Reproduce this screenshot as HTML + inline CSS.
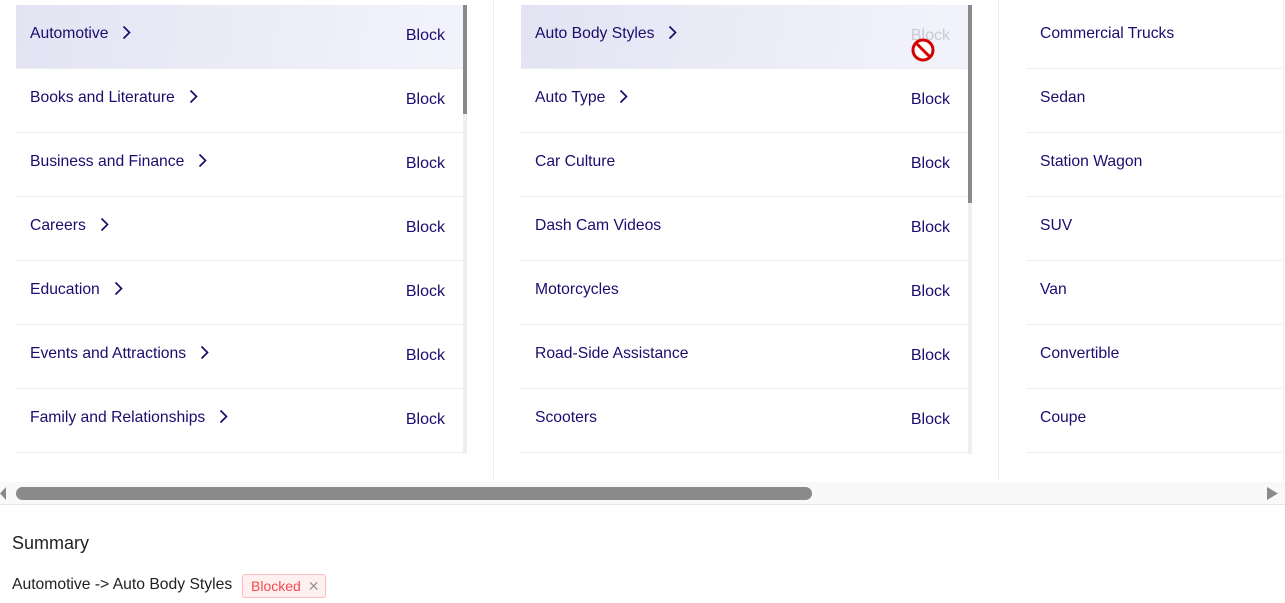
<!DOCTYPE html>
<html><head><meta charset="utf-8"><style>
*{margin:0;padding:0;box-sizing:border-box}
body{width:1285px;height:603px;overflow:hidden;background:#fff;font-family:"Liberation Sans",Arial,sans-serif;position:relative}
.col{position:absolute;top:5px}
.row{position:absolute;left:0;height:64px;border-bottom:1px solid #eeeef0;color:#1e0b6e;font-size:15.7px}
.row .t{position:absolute;left:14px;top:20px;white-space:nowrap}
.row .b{position:absolute;right:18px;top:22px;font-size:16px}
.chev{display:inline-block;width:9px;height:15px;margin-left:14px;vertical-align:-2px}
.sel{background:linear-gradient(100deg,#e3e4f3,#f3f3fc)}
.track{position:absolute;width:4px;background:#efefef}
.thumb{position:absolute;width:4px;background:#8a8a8a}
.div{position:absolute;top:0;width:1px;height:480px;background:#eeeeee}
</style></head><body>
<svg width="0" height="0" style="position:absolute"><defs><symbol id="c" viewBox="0 0 9 15"><polyline points="1.5,1.5 7.5,7.5 1.5,13.5" fill="none" stroke="#1e0b6e" stroke-width="1.7"/></symbol></defs></svg>

<div class="div" style="left:493px"></div>
<div class="div" style="left:998px"></div>
<div class="div" style="left:1283px"></div>

<div class="col" style="left:16px;width:447px">
<div class="row sel" style="top:0;width:447px"><span class="t">Automotive<svg class="chev"><use href="#c"/></svg></span><span class="b">Block</span></div>
<div class="row" style="top:64px;width:447px"><span class="t">Books and Literature<svg class="chev"><use href="#c"/></svg></span><span class="b">Block</span></div>
<div class="row" style="top:128px;width:447px"><span class="t">Business and Finance<svg class="chev"><use href="#c"/></svg></span><span class="b">Block</span></div>
<div class="row" style="top:192px;width:447px"><span class="t">Careers<svg class="chev"><use href="#c"/></svg></span><span class="b">Block</span></div>
<div class="row" style="top:256px;width:447px"><span class="t">Education<svg class="chev"><use href="#c"/></svg></span><span class="b">Block</span></div>
<div class="row" style="top:320px;width:447px"><span class="t">Events and Attractions<svg class="chev"><use href="#c"/></svg></span><span class="b">Block</span></div>
<div class="row" style="top:384px;width:447px"><span class="t">Family and Relationships<svg class="chev"><use href="#c"/></svg></span><span class="b">Block</span></div>
</div>
<div class="track" style="left:463px;top:5px;height:449px"></div>
<div class="thumb" style="left:463px;top:5px;height:109px"></div>

<div class="col" style="left:521px;width:447px">
<div class="row sel" style="top:0;width:447px"><span class="t">Auto Body Styles<svg class="chev"><use href="#c"/></svg></span><span class="b" style="color:#c9c9d2">Block</span></div>
<div class="row" style="top:64px;width:447px"><span class="t">Auto Type<svg class="chev"><use href="#c"/></svg></span><span class="b">Block</span></div>
<div class="row" style="top:128px;width:447px"><span class="t">Car Culture</span><span class="b">Block</span></div>
<div class="row" style="top:192px;width:447px"><span class="t">Dash Cam Videos</span><span class="b">Block</span></div>
<div class="row" style="top:256px;width:447px"><span class="t">Motorcycles</span><span class="b">Block</span></div>
<div class="row" style="top:320px;width:447px"><span class="t">Road-Side Assistance</span><span class="b">Block</span></div>
<div class="row" style="top:384px;width:447px"><span class="t">Scooters</span><span class="b">Block</span></div>
</div>
<div class="track" style="left:968px;top:5px;height:449px"></div>
<div class="thumb" style="left:968px;top:5px;height:198px"></div>
<svg style="position:absolute;left:911px;top:38px" width="24" height="24" viewBox="0 0 24 24"><circle cx="12" cy="12" r="10" fill="#fff" stroke="#d40000" stroke-width="3"/><line x1="5" y1="5" x2="19" y2="19" stroke="#d40000" stroke-width="3"/></svg>

<div class="col" style="left:1026px;width:257px">
<div class="row" style="top:0;width:257px"><span class="t">Commercial Trucks</span></div>
<div class="row" style="top:64px;width:257px"><span class="t">Sedan</span></div>
<div class="row" style="top:128px;width:257px"><span class="t">Station Wagon</span></div>
<div class="row" style="top:192px;width:257px"><span class="t">SUV</span></div>
<div class="row" style="top:256px;width:257px"><span class="t">Van</span></div>
<div class="row" style="top:320px;width:257px"><span class="t">Convertible</span></div>
<div class="row" style="top:384px;width:257px"><span class="t">Coupe</span></div>
</div>

<div style="position:absolute;left:0;top:482px;width:1285px;height:23px;background:#f9f9f9;border-bottom:1px solid #e6e6e6"></div>
<div style="position:absolute;left:16px;top:487px;width:796px;height:13px;border-radius:7px;background:#8a8a8a"></div>
<svg style="position:absolute;left:0;top:487px" width="6" height="13"><polygon points="6,0 6,13 0,6.5" fill="#8a8a8a"/></svg>
<svg style="position:absolute;left:1267px;top:487px" width="12" height="13"><polygon points="0,0 0,13 11,6.5" fill="#8a8a8a"/></svg>

<div style="position:absolute;left:12px;top:533px;font-size:18px;color:#222">Summary</div>
<div style="position:absolute;left:12px;top:576px;font-size:15.7px;color:#222">Automotive -&gt; Auto Body Styles</div>
<div style="position:absolute;left:242px;top:574px;width:84px;height:24px;border:1px solid #ffbcbc;background:#fff0f0;border-radius:3px;color:#f5484e;font-size:14px;padding:3px 0 0 8px">Blocked <span style="color:#999;margin-left:3px">✕</span></div>
</body></html>
